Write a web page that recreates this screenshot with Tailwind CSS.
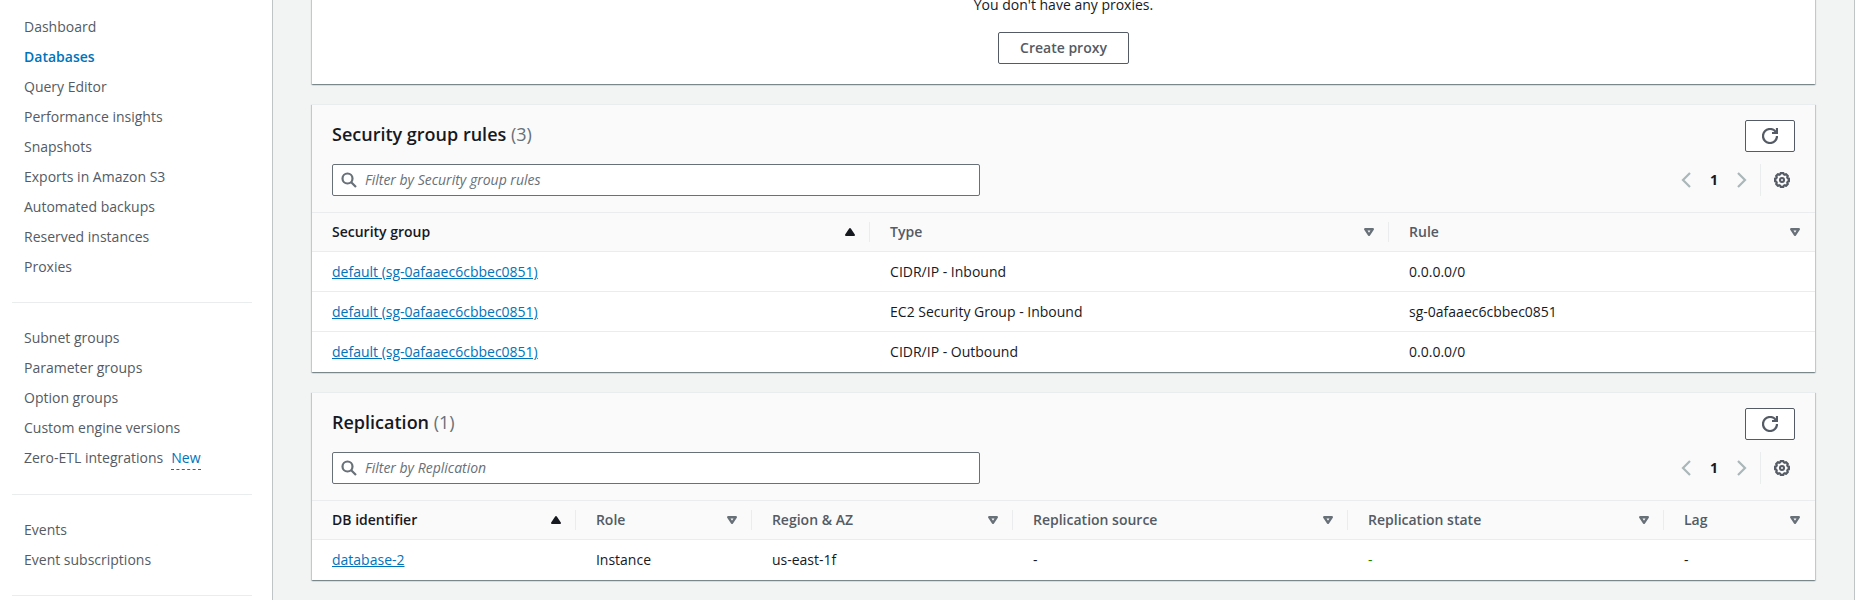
<!DOCTYPE html>
<html lang="en">
<head>
<meta charset="utf-8">
<meta name="viewport" content="width=device-width, initial-scale=1">
<title>Databases</title>
<script src="https://cdn.jsdelivr.net/npm/@tailwindcss/browser@4"></script>
</head>
<body class="flex h-screen overflow-hidden bg-[#f2f3f3] font-['Open_Sans','Noto_Sans',sans-serif] text-sm leading-[22px] text-[#16191f]">

<svg class="hidden" aria-hidden="true">
  <symbol id="search" viewBox="0 0 16 16"><g fill="none" stroke="currentColor" stroke-width="2.2"><circle cx="6.5" cy="6.5" r="5"/><path d="m15 15-5-5"/></g></symbol>
  <symbol id="refresh" viewBox="0 0 16 16"><g fill="none" stroke="currentColor" stroke-width="2.2"><path d="M10 5h5V0"/><path d="M15 8a6.957 6.957 0 0 1-7 7 6.957 6.957 0 0 1-7-7 6.957 6.957 0 0 1 7-7 6.87 6.87 0 0 1 6.3 4"/></g></symbol>
  <symbol id="prev" viewBox="0 0 16 16"><path d="m12 1-7 7 7 7" fill="none" stroke="currentColor" stroke-width="2.2"/></symbol>
  <symbol id="next" viewBox="0 0 16 16"><path d="m4 1 7 7-7 7" fill="none" stroke="currentColor" stroke-width="2.2"/></symbol>
  <symbol id="gear" viewBox="0 0 16 16"><g fill="none" stroke="currentColor" stroke-width="2.1" stroke-linejoin="round"><path d="M13.67 6.37 14.97 6.65V9.35L13.67 9.63 13.16 10.86 13.89 11.97 11.97 13.89 10.86 13.16 9.63 13.67 9.35 14.97H6.65L6.37 13.67 5.14 13.16 4.03 13.89 2.11 11.97 2.84 10.86 2.33 9.63 1.03 9.35V6.65L2.33 6.37 2.84 5.14 2.11 4.03 4.03 2.11 5.14 2.84 6.37 2.33 6.65 1.03H9.35L9.63 2.33 10.86 2.84 11.97 2.11 13.89 4.03 13.16 5.14Z"/><circle cx="8" cy="8" r="2"/></g></symbol>
  <symbol id="asc" viewBox="0 0 16 16"><path d="M8 5 12 11H4Z" fill="currentColor" stroke="currentColor" stroke-width="2" stroke-linejoin="round"/></symbol>
  <symbol id="sort" viewBox="0 0 16 16"><path d="M4.2 5.2H11.8L8 10.8Z" fill="none" stroke="currentColor" stroke-width="2.4" stroke-linejoin="round"/></symbol>
</svg>

<nav aria-label="RDS" class="w-[273px] shrink-0 border-r border-[#bfc5c5] bg-white pt-3 pr-5 pl-3 leading-[30px] text-[#545b64]">
  <ul class="mb-5 pl-3">
    <li><a href="#">Dashboard</a></li>
    <li><a href="#" aria-current="page" class="font-semibold text-[#0073bb]">Databases</a></li>
    <li><a href="#">Query Editor</a></li>
    <li><a href="#">Performance insights</a></li>
    <li><a href="#">Snapshots</a></li>
    <li><a href="#">Exports in Amazon S3</a></li>
    <li><a href="#">Automated backups</a></li>
    <li><a href="#">Reserved instances</a></li>
    <li><a href="#">Proxies</a></li>
  </ul>
  <hr class="border-[#eaeded]">
  <ul class="my-5 pl-3">
    <li><a href="#">Subnet groups</a></li>
    <li><a href="#">Parameter groups</a></li>
    <li><a href="#">Option groups</a></li>
    <li><a href="#">Custom engine versions</a></li>
    <li class="flex h-[31px] gap-2"><a href="#">Zero-ETL integrations</a><button type="button" class="mt-1 h-[23px] border-b border-dashed border-[#0073bb] leading-[22px] text-[#0073bb]">New</button></li>
  </ul>
  <hr class="border-[#eaeded]">
  <ul class="my-5 pl-3">
    <li><a href="#">Events</a></li>
    <li><a href="#">Event subscriptions</a></li>
  </ul>
  <hr class="border-[#eaeded]">
</nav>

<main class="min-w-0 flex-1 overflow-hidden border-r border-[#bfc5c5] px-[39px]">
  <div class="-mt-1.5 flex flex-col gap-5">

    <section class="flex flex-col items-center gap-4 bg-white pb-5 shadow-[0_1px_1px_0_rgba(0,28,36,0.3),1px_1px_1px_0_rgba(0,28,36,0.15),-1px_1px_1px_0_rgba(0,28,36,0.15)]">
      <p>You don't have any proxies.</p>
      <button type="button" class="h-8 rounded-xs border border-[#545b64] bg-white px-[21px] font-semibold text-[#545b64]">Create proxy</button>
    </section>

    <section class="border-t border-[#eaeded] bg-white shadow-[0_1px_1px_0_rgba(0,28,36,0.3),1px_1px_1px_0_rgba(0,28,36,0.15),-1px_1px_1px_0_rgba(0,28,36,0.15)]">
      <header class="flex flex-col gap-3 border-b border-[#eaeded] bg-[#fafafa] px-5 pt-[15px] pb-4">
        <div class="flex items-start justify-between">
          <h2 class="text-lg leading-7 font-semibold">Security group rules <span class="font-normal text-[#687078]">(3)</span></h2>
          <button type="button" aria-label="Refresh security group rules" class="flex h-8 w-[50px] items-center justify-center rounded-xs border border-[#545b64] bg-white text-[#545b64]"><svg class="size-4"><use href="#refresh"/></svg></button>
        </div>
        <div class="flex items-center justify-between">
          <label class="flex h-8 w-[648px] items-center gap-2 rounded-xs border border-[#687078] bg-white pl-2 text-[#687078]">
            <svg class="size-4 shrink-0"><use href="#search"/></svg>
            <input type="search" aria-label="Filter by Security group rules" placeholder="Filter by Security group rules" class="min-w-0 flex-1 italic outline-none placeholder:text-[#687078]">
          </label>
          <div class="flex items-center">
            <button type="button" disabled aria-label="Previous page" class="text-[#aab7b8]"><svg class="size-4"><use href="#prev"/></svg></button>
            <button type="button" aria-current="page" class="w-10 font-bold">1</button>
            <button type="button" disabled aria-label="Next page" class="text-[#aab7b8]"><svg class="size-4"><use href="#next"/></svg></button>
            <span class="ml-2.5 h-8 border-l border-[#eaeded]"></span>
            <button type="button" aria-label="Preferences" class="ml-[13px] pr-[5px] text-[#545b64]"><svg class="size-4"><use href="#gear"/></svg></button>
          </div>
        </div>
      </header>
      <table class="w-full table-fixed border-separate border-spacing-0 text-left">
        <colgroup><col class="w-[37.13%]"><col class="w-[34.53%]"><col></colgroup>
        <thead class="bg-[#fafafa] text-[#545b64]">
          <tr class="h-[39px]">
            <th class="border-b border-[#eaeded] p-0 text-[#16191f]" aria-sort="ascending"><button type="button" class="flex h-5 w-full items-center justify-between border-r border-[#eaeded] pr-[11px] pl-5 font-semibold">Security group<svg class="size-4"><use href="#asc"/></svg></button></th>
            <th class="border-b border-[#eaeded] p-0"><button type="button" class="flex h-5 w-full items-center justify-between border-r border-[#eaeded] pr-[11px] pl-5 font-semibold">Type<svg class="size-4 text-[#687078]"><use href="#sort"/></svg></button></th>
            <th class="border-b border-[#eaeded] p-0"><button type="button" class="flex h-5 w-full items-center justify-between pr-3 pl-5 font-semibold">Rule<svg class="size-4 text-[#687078]"><use href="#sort"/></svg></button></th>
          </tr>
        </thead>
        <tbody>
          <tr class="h-10">
            <td class="border-b border-[#eaeded] py-0 pl-5"><a href="#" class="text-[#0073bb] underline">default (sg-0afaaec6cbbec0851)</a></td>
            <td class="border-b border-[#eaeded] py-0 pl-5">CIDR/IP - Inbound</td>
            <td class="border-b border-[#eaeded] py-0 pl-5">0.0.0.0/0</td>
          </tr>
          <tr class="h-10">
            <td class="border-b border-[#eaeded] py-0 pl-5"><a href="#" class="text-[#0073bb] underline">default (sg-0afaaec6cbbec0851)</a></td>
            <td class="border-b border-[#eaeded] py-0 pl-5">EC2 Security Group - Inbound</td>
            <td class="border-b border-[#eaeded] py-0 pl-5">sg-0afaaec6cbbec0851</td>
          </tr>
          <tr class="h-10">
            <td class="py-0 pl-5"><a href="#" class="text-[#0073bb] underline">default (sg-0afaaec6cbbec0851)</a></td>
            <td class="py-0 pl-5">CIDR/IP - Outbound</td>
            <td class="py-0 pl-5">0.0.0.0/0</td>
          </tr>
        </tbody>
      </table>
    </section>

    <section class="border-t border-[#eaeded] bg-white shadow-[0_1px_1px_0_rgba(0,28,36,0.3),1px_1px_1px_0_rgba(0,28,36,0.15),-1px_1px_1px_0_rgba(0,28,36,0.15)]">
      <header class="flex flex-col gap-3 border-b border-[#eaeded] bg-[#fafafa] px-5 pt-[15px] pb-4">
        <div class="flex items-start justify-between">
          <h2 class="text-lg leading-7 font-semibold">Replication <span class="font-normal text-[#687078]">(1)</span></h2>
          <button type="button" aria-label="Refresh replication" class="flex h-8 w-[50px] items-center justify-center rounded-xs border border-[#545b64] bg-white text-[#545b64]"><svg class="size-4"><use href="#refresh"/></svg></button>
        </div>
        <div class="flex items-center justify-between">
          <label class="flex h-8 w-[648px] items-center gap-2 rounded-xs border border-[#687078] bg-white pl-2 text-[#687078]">
            <svg class="size-4 shrink-0"><use href="#search"/></svg>
            <input type="search" aria-label="Filter by Replication" placeholder="Filter by Replication" class="min-w-0 flex-1 italic outline-none placeholder:text-[#687078]">
          </label>
          <div class="flex items-center">
            <button type="button" disabled aria-label="Previous page" class="text-[#aab7b8]"><svg class="size-4"><use href="#prev"/></svg></button>
            <button type="button" aria-current="page" class="w-10 font-bold">1</button>
            <button type="button" disabled aria-label="Next page" class="text-[#aab7b8]"><svg class="size-4"><use href="#next"/></svg></button>
            <span class="ml-2.5 h-8 border-l border-[#eaeded]"></span>
            <button type="button" aria-label="Preferences" class="ml-[13px] pr-[5px] text-[#545b64]"><svg class="size-4"><use href="#gear"/></svg></button>
          </div>
        </div>
      </header>
      <table class="w-full table-fixed border-separate border-spacing-0 text-left">
        <colgroup><col class="w-[17.56%]"><col class="w-[11.71%]"><col class="w-[17.37%]"><col class="w-[22.29%]"><col class="w-[21.02%]"><col></colgroup>
        <thead class="bg-[#fafafa] text-[#545b64]">
          <tr class="h-[39px]">
            <th class="border-b border-[#eaeded] p-0 text-[#16191f]" aria-sort="ascending"><button type="button" class="flex h-5 w-full items-center justify-between border-r border-[#eaeded] pr-[11px] pl-5 font-semibold">DB identifier<svg class="size-4"><use href="#asc"/></svg></button></th>
            <th class="border-b border-[#eaeded] p-0"><button type="button" class="flex h-5 w-full items-center justify-between border-r border-[#eaeded] pr-[11px] pl-5 font-semibold">Role<svg class="size-4 text-[#687078]"><use href="#sort"/></svg></button></th>
            <th class="border-b border-[#eaeded] p-0"><button type="button" class="flex h-5 w-full items-center justify-between border-r border-[#eaeded] pr-[11px] pl-5 font-semibold">Region &amp; AZ<svg class="size-4 text-[#687078]"><use href="#sort"/></svg></button></th>
            <th class="border-b border-[#eaeded] p-0"><button type="button" class="flex h-5 w-full items-center justify-between border-r border-[#eaeded] pr-[11px] pl-5 font-semibold">Replication source<svg class="size-4 text-[#687078]"><use href="#sort"/></svg></button></th>
            <th class="border-b border-[#eaeded] p-0"><button type="button" class="flex h-5 w-full items-center justify-between border-r border-[#eaeded] pr-[11px] pl-5 font-semibold">Replication state<svg class="size-4 text-[#687078]"><use href="#sort"/></svg></button></th>
            <th class="border-b border-[#eaeded] p-0"><button type="button" class="flex h-5 w-full items-center justify-between pr-3 pl-5 font-semibold">Lag<svg class="size-4 text-[#687078]"><use href="#sort"/></svg></button></th>
          </tr>
        </thead>
        <tbody>
          <tr class="h-10">
            <td class="py-0 pl-5"><a href="#" class="text-[#0073bb] underline">database-2</a></td>
            <td class="py-0 pl-5">Instance</td>
            <td class="py-0 pl-5">us-east-1f</td>
            <td class="py-0 pl-5">-</td>
            <td class="py-0 pl-5 text-[#1d8102]">-</td>
            <td class="py-0 pl-5">-</td>
          </tr>
        </tbody>
      </table>
    </section>

  </div>
</main>
</body>
</html>
